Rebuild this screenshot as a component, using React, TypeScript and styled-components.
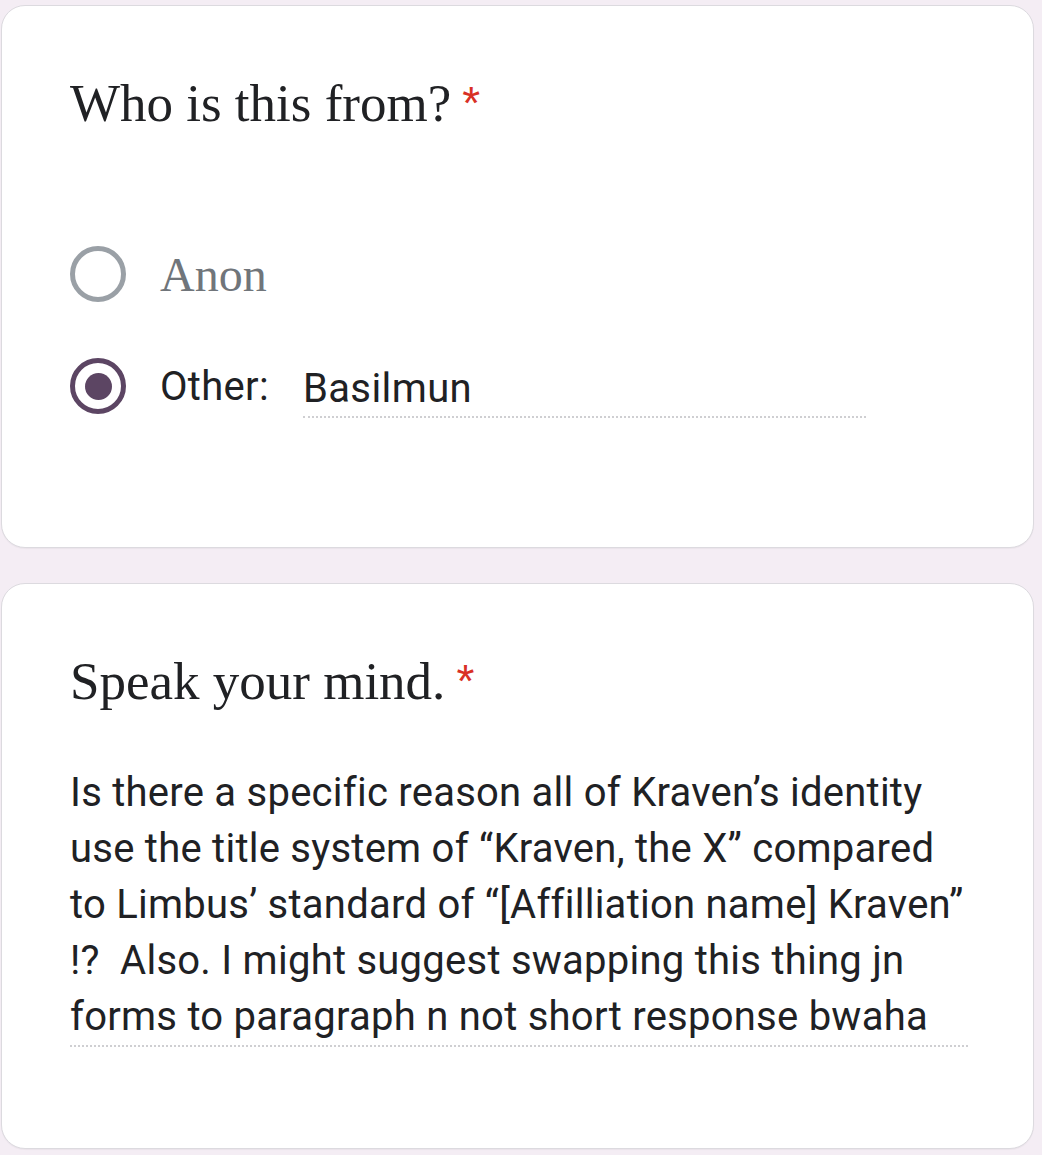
import React from "react";
import styled, { createGlobalStyle } from "styled-components";

const GlobalStyle = createGlobalStyle`
  html, body {
    margin: 0;
    padding: 0;
    background: #f4edf4;
  }
  * {
    box-sizing: border-box;
  }
`;

const Page = styled.div`
  display: flex;
  flex-direction: column;
  gap: 35px;
  padding: 5px 8px 6px 1px;
  background: #f4edf4;
  min-height: 1155px;
`;

const Card = styled.section<{ bottom: number }>`
  background: #ffffff;
  border: 1.5px solid #dcdadf;
  border-radius: 24px;
  padding: 65px 67px ${(p) => p.bottom}px 68px;
  box-shadow: 0 1px 1px rgba(0, 0, 0, 0.04);
`;

const Title = styled.h2`
  margin: 0;
  font-family: "Liberation Serif", serif;
  font-weight: 400;
  font-size: 53px;
  line-height: 64px;
  color: #202124;
`;

const Required = styled.span`
  color: #d93025;
  font-family: "Liberation Sans", sans-serif;
  font-size: 46px;
  margin-left: 11px;
  vertical-align: 2px;
`;

const Options = styled.div`
  display: flex;
  flex-direction: column;
  gap: 56px;
  margin-top: 111px;
`;

const OptionRow = styled.label`
  display: flex;
  align-items: center;
  height: 56px;
`;

const Radio = styled.span<{ checked?: boolean }>`
  width: 56px;
  height: 56px;
  flex: none;
  border-radius: 50%;
  border: 5px solid ${(p) => (p.checked ? "#5c4563" : "#9aa0a6")};
  display: flex;
  align-items: center;
  justify-content: center;

  &::after {
    content: "";
    display: ${(p) => (p.checked ? "block" : "none")};
    width: 27px;
    height: 27px;
    border-radius: 50%;
    background: #5c4563;
  }
`;

const OptionLabel = styled.span`
  margin-left: 34px;
  font-family: "Liberation Serif", serif;
  font-size: 48px;
  color: #70757a;
`;

const OtherLabel = styled.span`
  margin-left: 34px;
  font-family: Roboto, sans-serif;
  font-size: 40px;
  color: #202124;
  letter-spacing: 0.3px;
`;

const OtherInput = styled.div`
  margin-left: 34px;
  width: 563px;
  height: 58px;
  padding-top: 3px;
  font-family: Roboto, sans-serif;
  font-size: 40px;
  line-height: 52px;
  letter-spacing: 0.4px;
  color: #202124;
  border-bottom: 2px dotted #cfcfd2;
  align-self: flex-start;
  position: relative;
  top: 2px;
`;

const Answer = styled.div`
  margin-top: 52px;
  width: 898px;
  font-family: Roboto, sans-serif;
  font-size: 40px;
  line-height: 56px;
  letter-spacing: 0.25px;
  white-space: nowrap;
  color: #202124;
  border-bottom: 2px dotted #cfcfd2;
`;

const answerLines = [
  "Is there a specific reason all of Kraven’s identity",
  "use the title system of “Kraven, the X” compared",
  "to Limbus’ standard of “[Affilliation name] Kraven”",
  "!?\u00a0 Also. I might suggest swapping this thing jn",
  "forms to paragraph n not short response bwaha",
];

const App = () => {
  return (
    <>
      <GlobalStyle />
      <Page>
        <Card bottom={133}>
          <Title>
            Who is this from?<Required>*</Required>
          </Title>
          <Options>
            <OptionRow>
              <Radio />
              <OptionLabel>Anon</OptionLabel>
            </OptionRow>
            <OptionRow>
              <Radio checked />
              <OtherLabel>Other:</OtherLabel>
              <OtherInput>Basilmun</OtherInput>
            </OptionRow>
          </Options>
        </Card>
        <Card bottom={101}>
          <Title>
            Speak your mind.<Required>*</Required>
          </Title>
          <Answer>
            {answerLines.map((line, i) => (
              <React.Fragment key={i}>
                {line}
                {i < answerLines.length - 1 && <br />}
              </React.Fragment>
            ))}
          </Answer>
        </Card>
      </Page>
    </>
  );
};

export default App;
